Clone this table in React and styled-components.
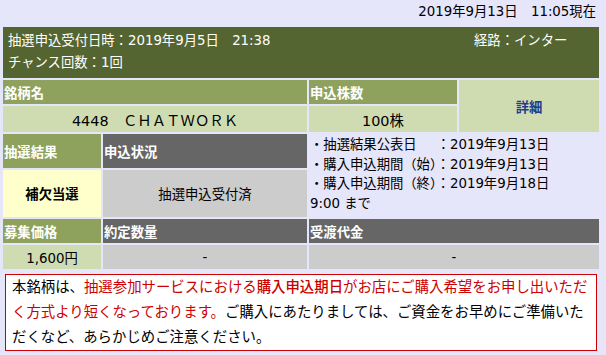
import React from "react";
import styled, { createGlobalStyle } from "styled-components";

const Global = createGlobalStyle`
  html, body { margin: 0; padding: 0; background: #e6e6fa; }
  body {
    font-family: "DejaVu Sans", "Noto Sans CJK JP", sans-serif;
    font-size: 13.33px;
    color: #000;
  }
`;

const Page = styled.div`
  width: 606px;
  box-sizing: border-box;
  padding: 0 7px 0 3px;
`;

const TopLine = styled.div`
  height: 27px;
  box-sizing: border-box;
  padding: 2px 3px 0 0;
  line-height: 20px;
  text-align: right;
`;

const Band = styled.div`
  background: #556531;
  color: #fff;
  display: grid;
  grid-template-columns: 466px 1fr;
  padding: 3px 0 4px 5px;
  line-height: 22px;
  margin-bottom: 2px;
`;

const Grid = styled.div`
  display: grid;
  grid-template-columns: 98px 204px 148px 140px;
  grid-template-rows: 24px 26px 34px 47px 24px 24px;
  gap: 2px;
`;

const tones = {
  green: "#8ea25e",
  gray: "#666666",
};

const HeadCell = styled.div`
  grid-column: ${(p) => p.$col};
  grid-row: ${(p) => p.$row};
  background: ${(p) => tones[p.$tone]};
  color: #fff;
  font-weight: bold;
  display: flex;
  align-items: center;
  padding-left: 1px;
`;

const fills = {
  light: "#cfdcb2",
  yellow: "#ffffcc",
  gray: "#cccccc",
};

const ValueCell = styled.div`
  grid-column: ${(p) => p.$col};
  grid-row: ${(p) => p.$row};
  background: ${(p) => fills[p.$fill]};
  display: flex;
  align-items: center;
  justify-content: center;
  font-size: ${(p) => (p.$big ? "14.4px" : "13.33px")};
  font-weight: ${(p) => (p.$bold ? "bold" : "normal")};
`;

const DetailLink = styled.a`
  color: #1f3c8f;
  font-weight: bold;
  text-decoration: none;
`;

const Info = styled.div`
  grid-column: 3 / 5;
  grid-row: 3 / 5;
  padding: 1px 0 0 1px;
  line-height: 19.5px;
`;

const Notice = styled.div`
  margin: 5px 2px 0;
  background: #fff;
  border: 1px solid #cc0000;
  padding: 0 0 0 6px;
  font-size: 14.4px;
  line-height: 25px;
`;

const Red = styled.span`
  color: #cc0000;
  font-weight: ${(p) => (p.$bold ? 500 : "normal")};
`;

export default function App() {
  return (
    <Page>
      <Global />
      <TopLine>2019年9月13日　11:05現在</TopLine>
      <Band>
        <div>抽選申込受付日時：2019年9月5日　21:38</div>
        <div>経路：インター</div>
        <div>チャンス回数：1回</div>
      </Band>
      <Grid>
        <HeadCell $col="1 / 3" $row="1" $tone="green">銘柄名</HeadCell>
        <HeadCell $col="3" $row="1" $tone="green">申込株数</HeadCell>
        <ValueCell $col="4" $row="1 / 3" $fill="light">
          <DetailLink href="#">詳細</DetailLink>
        </ValueCell>
        <ValueCell $col="1 / 3" $row="2" $fill="light" $big>
          4448　ＣＨＡＴＷＯＲＫ
        </ValueCell>
        <ValueCell $col="3" $row="2" $fill="light" $big>100株</ValueCell>

        <HeadCell $col="1" $row="3" $tone="green">抽選結果</HeadCell>
        <HeadCell $col="2" $row="3" $tone="gray">申込状況</HeadCell>
        <Info>
          ・抽選結果公表日　{"\u2002"}：2019年9月13日
          <br />
          ・購入申込期間（始）：2019年9月13日
          <br />
          ・購入申込期間（終）：2019年9月18日
          <br />
          9:00 まで
        </Info>
        <ValueCell $col="1" $row="4" $fill="yellow" $bold>補欠当選</ValueCell>
        <ValueCell $col="2" $row="4" $fill="gray">抽選申込受付済</ValueCell>

        <HeadCell $col="1" $row="5" $tone="green">募集価格</HeadCell>
        <HeadCell $col="2" $row="5" $tone="gray">約定数量</HeadCell>
        <HeadCell $col="3 / 5" $row="5" $tone="gray">受渡代金</HeadCell>
        <ValueCell $col="1" $row="6" $fill="light">1,600円</ValueCell>
        <ValueCell $col="2" $row="6" $fill="gray">-</ValueCell>
        <ValueCell $col="3 / 5" $row="6" $fill="gray">-</ValueCell>
      </Grid>
      <Notice>
        本銘柄は、<Red>抽選参加サービスにおける</Red>
        <Red $bold>購入申込期日</Red>
        <Red>がお店にご購入希望をお申し出いただく方式より短くなっております。</Red>
        ご購入にあたりましては、ご資金をお早めにご準備いただくなど、あらかじめご注意ください。
      </Notice>
    </Page>
  );
}
